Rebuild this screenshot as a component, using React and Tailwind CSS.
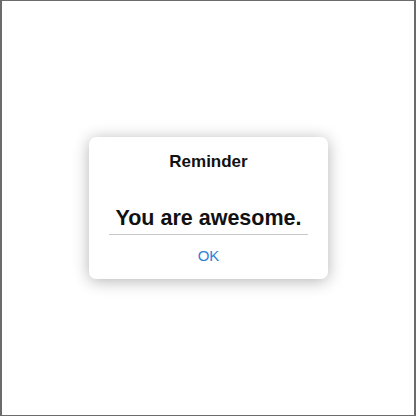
import React from 'react';

// Alerta simple tipo iOS centrada en la página
export default function App() {
  return (
    <div
      className="w-[416px] h-[416px] bg-white border-t border-b border-l-2 border-r-2 border-[#6b6b6b] flex items-center justify-center"
      style={{ fontFamily: '"Liberation Sans", Arial, sans-serif' }}
    >
      <div className="w-[239px] h-[142px] bg-white rounded-[7px] shadow-[0_2px_16px_rgba(0,0,0,0.3)] flex flex-col items-stretch pt-[15px] ml-[1px]">
        <div className="text-center text-[17px] leading-[20px] font-bold text-[#111]">Reminder</div>
        <div className="mt-[33px] text-center text-[21.5px] leading-[26px] font-bold text-[#111]">You are awesome.</div>
        <div className="mt-[3px] mx-[20px] h-px bg-[#c8c8c8]" />
        <button className="mt-[12px] text-center text-[15px] leading-[18px] text-[#2f7fd8]">OK</button>
      </div>
    </div>
  );
}
